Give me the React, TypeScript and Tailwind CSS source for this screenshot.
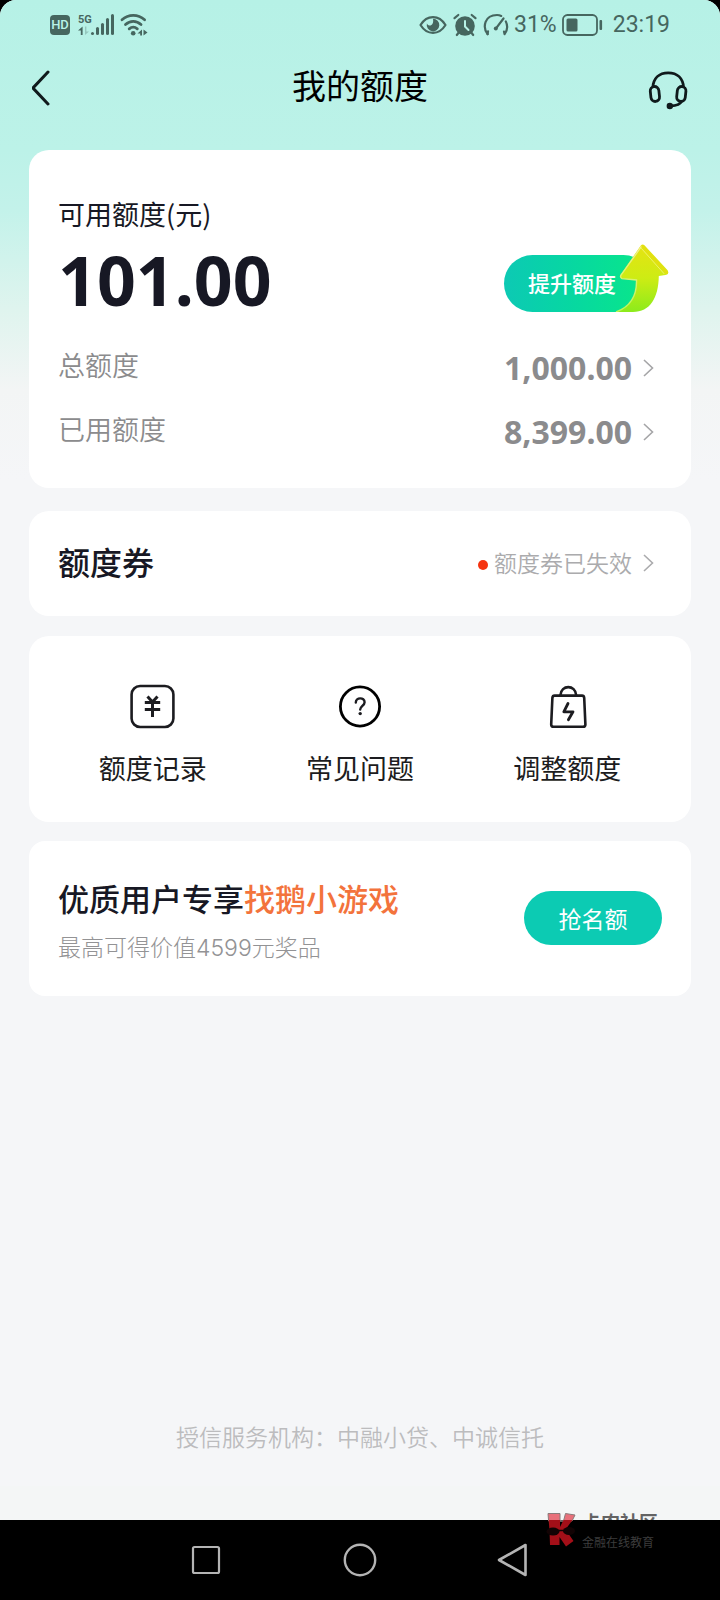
import type { ReactNode } from "react";

function ChevronRight({ className = "" }: { className?: string }) {
    return (
        <svg width="24" height="24" viewBox="0 0 24 24" fill="none" className={className} aria-hidden>
            <path d="M6 4L14.5 12L6 20" stroke="currentColor" strokeWidth="1.6" />
        </svg>
    );
}

/* ── System status bar ───────────────────────────── */
function StatusBar() {
    return (
        <div className="flex h-12 items-center justify-between px-[50px] pt-0.5 font-['Roboto',sans-serif] text-[#46665f]">
            <div className="flex items-center">
                {/* HD badge */}
                <span className="mr-2 flex h-5 w-5 items-center justify-center rounded bg-[#46665f] text-[13px] font-medium text-[#b8f2e7]">
                    HD
                </span>
                {/* 5G signal */}
                <div className="mr-1.5 flex items-end">
                    <div className="flex w-3 flex-col">
                        <span className="text-[11px] leading-3 font-bold">5G</span>
                        <svg width="12" height="10" viewBox="0 0 12 10" aria-hidden>
                            <path d="M0 4.5L4.6 0.5V9H2.8V4.5Z" fill="currentColor" />
                            <path d="M7 0.5V9L11 5.5H8.4V0.5Z" fill="currentColor" opacity="0.3" />
                        </svg>
                    </div>
                    <svg width="24" height="22" viewBox="0 0 24 22" fill="currentColor" aria-hidden>
                        <rect x="1" y="18" width="3" height="3" rx="1.5" />
                        <rect x="6" y="13" width="3" height="8" rx="1.5" />
                        <rect x="11" y="9" width="3" height="12" rx="1.5" />
                        <rect x="16" y="4" width="3" height="17" rx="1.5" />
                        <rect x="21" y="0" width="3" height="21" rx="1.5" />
                    </svg>
                </div>
                {/* WiFi */}
                <svg width="28" height="24" viewBox="0 0 28 24" fill="none" stroke="currentColor" strokeWidth="2.8" strokeLinecap="round" aria-hidden>
                    <path d="M2 6.8C8.5 1 18 1 24.6 6.8" />
                    <path d="M5.5 11.5C10 7.2 16.5 7.2 21 11.5" />
                    <path d="M9.2 15.8C11.6 13.8 14.9 13.8 17.3 15.8" />
                    <circle cx="13.2" cy="20.2" r="2.3" fill="currentColor" stroke="none" />
                    <path d="M17.5 20.5L22 16.5V22.5H20.2V20.5Z" fill="currentColor" stroke="none" />
                    <path d="M23.5 16.5V22.5L27.5 19.5Z" fill="currentColor" stroke="none" />
                </svg>
            </div>

            <div className="flex items-center gap-[5px] text-[23px]">
                {/* Eye */}
                <svg width="28" height="22" viewBox="0 0 28 22" fill="none" aria-hidden>
                    <path d="M1.5 11C8 0.5 20 0.5 26.5 11C20 21.5 8 21.5 1.5 11Z" stroke="currentColor" strokeWidth="2.2" strokeLinejoin="round" />
                    <path d="M14 4.8A6.3 6.3 0 1 1 7.9 9.6Q9 12.2 11.6 11.4Q15 10 14 4.8Z" fill="currentColor" />
                </svg>
                {/* Alarm */}
                <svg width="26" height="24" viewBox="0 0 26 24" fill="none" strokeLinecap="round" aria-hidden>
                    <circle cx="13" cy="13" r="9.8" fill="currentColor" />
                    <path d="M2.5 5.2L6.3 2M23.5 5.2L19.7 2M6.8 19.5L4.8 22M19.2 19.5L21.2 22" stroke="currentColor" strokeWidth="2.2" />
                    <path d="M13 8V13.5L16.5 17" stroke="#b8f2e7" strokeWidth="2" />
                </svg>
                {/* Speed gauge */}
                <svg width="26" height="24" viewBox="0 0 26 24" fill="none" stroke="currentColor" strokeWidth="2.2" strokeLinecap="round" strokeLinejoin="round" aria-hidden>
                    <path d="M4.6 21.2C-0.8 14 1.6 2 14 2C15.8 2 17 2.3 18.2 2.9" />
                    <path d="M22.8 8.4C25 13 24 18 21.6 21.2L21 18.6M4.6 21.2L5 18.4" />
                    <path d="M20.5 5.5L13.2 15.2" />
                    <circle cx="12.8" cy="15.5" r="2" fill="currentColor" stroke="none" />
                </svg>
                <span>31%</span>
                {/* Battery */}
                <svg width="42" height="22" viewBox="0 0 42 22" fill="none" aria-hidden>
                    <rect x="1" y="1" width="34" height="20" rx="4.5" stroke="currentColor" strokeWidth="1.8" />
                    <rect x="4.5" y="4.5" width="11" height="13" rx="1.5" fill="currentColor" />
                    <rect x="37.5" y="6" width="2.6" height="10" rx="1" fill="currentColor" />
                </svg>
                <time className="pl-1">23:19</time>
            </div>
        </div>
    );
}

function Header() {
    return (
        <header className="flex h-[78px] items-center justify-between px-8 text-[#101a1c]">
            <button type="button" aria-label="返回" className="flex w-10 items-center">
                <svg width="22" height="38" viewBox="2 0 22 38" fill="none" stroke="currentColor" strokeWidth="3" strokeLinecap="round" strokeLinejoin="round" aria-hidden>
                    <path d="M18 4L3 20L18 36" />
                </svg>
            </button>
            <h1 className="pb-1 text-[34px] leading-10 text-black">我的额度</h1>
            <button type="button" aria-label="客服" className="flex items-center pt-1.5">
                <svg width="40" height="40" viewBox="0 0 40 40" fill="none" stroke="currentColor" strokeWidth="2.8" aria-hidden>
                    <path d="M4.8 17.5C5.4 8.5 11 2.8 20.2 2.8S35 8.5 35.6 17.5" />
                    <rect x="2.6" y="16.5" width="8.6" height="15" rx="4.3" transform="rotate(-6 6.8 24)" />
                    <rect x="29" y="16.5" width="8.6" height="15" rx="4.3" transform="rotate(6 33.4 24)" />
                    <path d="M33.8 31C32.2 34.6 28 35.8 22.5 36" />
                    <circle cx="21.8" cy="36" r="3.2" fill="currentColor" stroke="none" />
                </svg>
            </button>
        </header>
    );
}

/* Arrow that pokes out over the top right of the "raise quota" button */
function RaiseArrow() {
    return (
        <svg width="54" height="68" viewBox="0 0 54 68" className="absolute -right-[17px] bottom-0" aria-hidden>
            <defs>
                <linearGradient id="arrow-body" x1="0" y1="0" x2="0" y2="1">
                    <stop offset="0" stopColor="#e6e312" />
                    <stop offset="0.5" stopColor="#cdec14" />
                    <stop offset="1" stopColor="#8ceb1c" />
                </linearGradient>
                <linearGradient id="arrow-edge" x1="0" y1="0" x2="0" y2="1">
                    <stop offset="0" stopColor="#f4f08a" />
                    <stop offset="1" stopColor="#bdf55a" />
                </linearGradient>
            </defs>
            <path
                d="M25.8 1.6Q27.6 -0.6 29.6 1.4L52.6 26.2Q54.6 30.4 50.4 31L43.8 32C43.5 54 35 68 18 68H1C15 63 22 53 21.5 36L7 34.6Q3.8 33.6 5.4 31Z"
                fill="url(#arrow-body)"
            />
            <path d="M1 68C15 63 22 53 21.5 36L7 34.6Q4.8 33.4 6 31.2L26.6 2.2" fill="none" stroke="url(#arrow-edge)" strokeWidth="1.4" />
            <path d="M28 2.6L51.6 28.6" stroke="#e2e010" strokeWidth="3" strokeLinecap="round" />
            <path d="M26.5 4.5L49 29.6" stroke="#f0f268" strokeWidth="1" strokeLinecap="round" />
        </svg>
    );
}

function AmountRow({ label, value }: { label: string; value: string }) {
    return (
        <button type="button" className="flex h-16 w-full items-center justify-between text-[#8b8b8d]">
            <span className="pb-1 text-[27px] leading-9 font-[350]">{label}</span>
            <span className="flex items-center gap-1.5 pt-0.5">
                <span className="font-['Noto_Sans',sans-serif] text-[32px] leading-9 font-bold">{value}</span>
                <ChevronRight className="text-[#a5a5a7]" />
            </span>
        </button>
    );
}

function QuotaCard() {
    return (
        <section className="rounded-[20px] bg-white px-[29px] pt-11 pb-[25px]">
            <h2 className="text-[27px] leading-10 text-[#171824]">可用额度(元)</h2>
            <div className="mt-3 flex items-center justify-between">
                <strong className="font-['Noto_Sans',sans-serif] text-[68px] leading-none font-bold text-[#171824]">101.00</strong>
                <button
                    type="button"
                    className="relative mt-1.5 mr-2.5 h-[57px] w-[148px] rounded-full bg-linear-to-r from-[#0dc9b4] to-[#0be886] pb-0.5 pl-6 text-left text-[22px] font-medium text-white"
                >
                    提升额度
                    <RaiseArrow />
                </button>
            </div>
            <div className="mt-[21px]">
                <AmountRow label="总额度" value="1,000.00" />
                <AmountRow label="已用额度" value="8,399.00" />
            </div>
        </section>
    );
}

function CouponCard() {
    return (
        <section className="mt-[23px] rounded-[20px] bg-white px-[29px]">
            <button type="button" className="flex h-[105px] w-full items-center justify-between pb-0.5">
                <span className="pb-1 text-[32px] leading-10 font-medium text-[#171824]">额度券</span>
                <span className="flex items-center text-[#ababad]">
                    <span className="mt-1 mr-1.5 h-2.5 w-2.5 rounded-full bg-[#f5330f]" />
                    <span className="mr-1.5 pb-0.5 text-[23px] leading-8 font-[350]">额度券已失效</span>
                    <ChevronRight />
                </span>
            </button>
        </section>
    );
}

function Shortcut({ label, children }: { label: string; children: ReactNode }) {
    return (
        <button type="button" className="flex flex-col items-center gap-[19px] text-[#1c1c20]">
            <svg width="46" height="46" viewBox="0 0 46 46" fill="none" stroke="currentColor" strokeWidth="2.6" strokeLinecap="round" strokeLinejoin="round" aria-hidden>
                {children}
            </svg>
            <span className="text-[27px] leading-10">{label}</span>
        </button>
    );
}

function Shortcuts() {
    return (
        <section className="mt-5 grid grid-cols-3 rounded-[20px] bg-white px-5 pt-[47px] pb-[34px]">
            <Shortcut label="额度记录">
                <rect x="1.6" y="3" width="41.8" height="41" rx="8.5" />
                <path d="M17.5 13.5L22.5 19L27.5 13.5M22.5 18V34M14.8 19.6H30.2M14.8 26.6H30.2" strokeLinecap="butt" strokeWidth="3" />
            </Shortcut>
            <Shortcut label="常见问题">
                <circle cx="23" cy="23.5" r="19.6" stroke="#000" strokeWidth="2.8" />
                <path d="M18.8 19.6C18.8 14 27.6 14 27.6 19.2C27.6 22.6 23.2 23.2 23.2 26.6" strokeWidth="2.4" />
                <circle cx="23.2" cy="30.6" r="1.7" fill="currentColor" stroke="none" />
            </Shortcut>
            <Shortcut label="调整额度">
                <path d="M10.6 12.6H38Q40 12.6 40.2 14.8L41.4 41.4Q41.4 43.8 39 43.8H9.6Q7.2 43.8 7.2 41.4L8.4 14.8Q8.6 12.6 10.6 12.6Z" />
                <path d="M16.4 12.2C17 1.4 31.6 1.4 32.2 12.2" />
                <path d="M24 20.5L19.8 28.8H29L24.4 36.8" strokeWidth="2.8" />
            </Shortcut>
        </section>
    );
}

function PromoCard() {
    return (
        <section className="mt-[19px] flex items-center justify-between rounded-2xl bg-white px-[29px] pt-[35px] pb-8">
            <div>
                <h2 className="text-[31px] leading-11 font-medium text-[#171824]">
                    优质用户专享<span className="text-[#f3733c]">找鹅小游戏</span>
                </h2>
                <p className="mt-3 font-['Inter','Noto_Sans_CJK_SC',sans-serif] text-[23px] leading-8 font-light text-[#939395]">
                    最高可得价值4599元奖品
                </p>
            </div>
            <button type="button" className="mb-1 h-[54px] w-[138px] rounded-full bg-[#0ccbb3] text-[23px] text-white">
                抢名额
            </button>
        </section>
    );
}

/* ── Android navigation bar with the community mark over its edge ── */
function NavBar() {
    return (
        <nav className="relative flex h-20 items-center justify-center gap-[120px] bg-black text-[#b4b4b4]">
            <button type="button" aria-label="最近任务">
                <svg width="34" height="34" viewBox="0 0 34 34" fill="none" stroke="currentColor" strokeWidth="2.2" aria-hidden>
                    <rect x="4" y="4" width="26" height="26" rx="1.5" />
                </svg>
            </button>
            <button type="button" aria-label="主页">
                <svg width="34" height="34" viewBox="0 0 34 34" fill="none" stroke="currentColor" strokeWidth="2.4" aria-hidden>
                    <circle cx="17" cy="17" r="15.2" />
                </svg>
            </button>
            <button type="button" aria-label="返回上一页">
                <svg width="34" height="34" viewBox="0 0 34 34" fill="none" stroke="currentColor" strokeWidth="2.6" strokeLinejoin="round" aria-hidden>
                    <path d="M28.5 2V32L2 17Z" />
                </svg>
            </button>

            <div className="absolute -top-2 right-[62px] flex items-start gap-1.5">
                <svg width="30" height="36" viewBox="0 0 30 36" aria-hidden>
                    <path d="M2 1.5H14V9H17.5L19.5 1.5L29 3L26 9H2.6Z" fill="#e8707a" stroke="#8a7a7a" strokeWidth="1" />
                    <path d="M2.6 8H14V15L17.5 8H26.5L19.5 17.5L27.5 29L20 34.5L13.5 25V33H4L3.5 18Z" fill="#a30f18" />
                    <ellipse cx="7" cy="19.5" rx="6.5" ry="4" fill="#120304" />
                    <ellipse cx="23" cy="19" rx="6" ry="4" fill="#120304" />
                    <path d="M12 18.5H18" stroke="#120304" strokeWidth="1.5" />
                </svg>
                <div className="flex flex-col gap-0.5">
                    <span className="text-[19px] leading-5 font-bold text-black/60">卡农社区</span>
                    <span className="text-[12px] leading-4 text-[#3c3c3c]">金融在线教育</span>
                </div>
            </div>
        </nav>
    );
}

export default function App() {
    return (
        <div className="bg-black font-['Noto_Sans_CJK_SC',sans-serif]">
            <div className="flex min-h-screen flex-col overflow-hidden rounded-t-2xl bg-[#f5f6f8]">
                <div className="flex-1 bg-[linear-gradient(180deg,#b6f1e6_0px,#bcf2e8_150px,#c3f2ea_210px,#dff4ee_310px,#f3f5f5_390px,#f5f6f8_480px)]">
                    <StatusBar />
                    <Header />
                    <main className="mx-[29px] mt-6">
                        <QuotaCard />
                        <CouponCard />
                        <Shortcuts />
                        <PromoCard />
                    </main>
                </div>
                <footer className="pb-[34px] text-center text-[23px] leading-8 font-[350] text-[#bcbcbe]">
                    授信服务机构：中融小贷、中诚信托
                </footer>
                <div className="h-[34px] bg-[#f4f6f6]" />
                <NavBar />
            </div>
        </div>
    );
}
